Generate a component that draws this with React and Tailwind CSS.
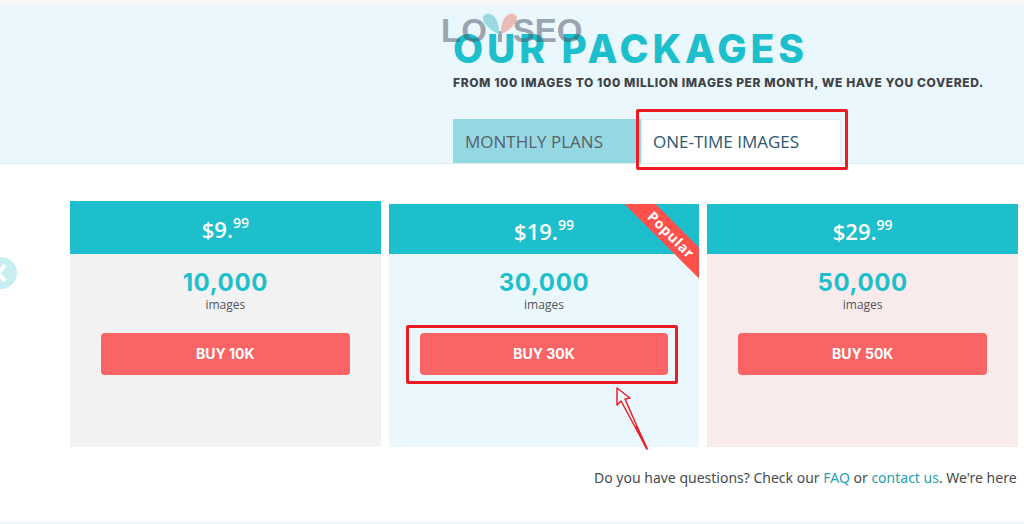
import { useState } from "react"
import clsx from "clsx"

const plans = [
  { dollars: 9, images: "10,000", label: "BUY 10K", body: "bg-[#f2f2f2]" },
  {
    dollars: 19,
    images: "30,000",
    label: "BUY 30K",
    body: "bg-[#eaf8fd]",
    popular: true,
  },
  { dollars: 29, images: "50,000", label: "BUY 50K", body: "bg-[#f9ebeb]" },
]

function Watermark() {
  return (
    <div
      className="pointer-events-none absolute top-2 left-[441px] flex font-['Liberation_Sans',sans-serif] text-[33px] leading-9 font-bold text-[#4b5568] opacity-50"
      aria-hidden="true"
    >
      <span>LO</span>
      <svg className="-mx-1 h-9 w-[34px]" viewBox="0 0 34 36">
        <defs>
          <pattern id="dots" width="3" height="3" patternUnits="userSpaceOnUse">
            <circle cx="1" cy="1" r="0.6" fill="#3b7f92" />
          </pattern>
        </defs>
        <path d="M17 18v11" stroke="#4b5568" strokeWidth="4" />
        <path d="M16 21C7 18 -1 9 0 4C2 -1 10 0 13 6C16 11 16 16 16 21Z" fill="#4fc3c8" />
        <path d="M16 21C7 18 -1 9 0 4C2 -1 10 0 13 6C16 11 16 16 16 21Z" fill="url(#dots)" />
        <path d="M18 21C27 18 35 9 34 4C32 -1 24 0 21 6C18 11 18 16 18 21Z" fill="#ff806f" />
        <path d="M18 21C27 18 35 9 34 4C32 -1 24 0 21 6C18 11 18 16 18 21Z" fill="url(#dots)" />
      </svg>
      <span>SEO</span>
    </div>
  )
}

function PlanTabs() {
  const [active, setActive] = useState("one-time")

  const tabClass = (name) =>
    clsx(
      "block h-full w-full border border-b-0 pl-[11px] text-left text-[17px] whitespace-nowrap cursor-pointer",
      active === name
        ? "border-[#e3eef2] bg-white text-[#2c5870]"
        : "border-[#94d8e4] bg-[#94d8e4] text-[#5b5f68]"
    )

  return (
    <div className="mt-[26px] flex h-11" role="tablist">
      <div className="w-[188px]">
        <button
          role="tab"
          aria-selected={active === "monthly"}
          className={tabClass("monthly")}
          onClick={() => setActive("monthly")}
        >
          MONTHLY PLANS
        </button>
      </div>
      <div className="relative w-[200px]">
        <button
          role="tab"
          aria-selected={active === "one-time"}
          className={tabClass("one-time")}
          onClick={() => setActive("one-time")}
        >
          ONE-TIME IMAGES
        </button>
        {/* Highlight around the tab */}
        <div className="pointer-events-none absolute -top-2.5 -right-[7px] -bottom-[7px] -left-[5px] rounded-xs border-3 border-[#ed1c24]"></div>
      </div>
    </div>
  )
}

function PlanCard({ plan }) {
  return (
    <article className="relative text-center">
      <div
        className={clsx(
          "flex items-center justify-center bg-[#1ebfcc] text-[22px] font-semibold text-white",
          plan.dollars === 9 ? "h-[53px]" : "h-[50px]"
        )}
      >
        <p className="pt-1">
          ${plan.dollars}.<sup className="-top-2.5 text-sm">99</sup>
        </p>
      </div>
      <div className={clsx("h-[193px] px-[31px] pt-[15px]", plan.body)}>
        <h2 className="font-[Inter,sans-serif] text-2xl leading-7 font-bold tracking-wide text-[#1ebfcc]">
          {plan.images}
        </h2>
        <p className="text-xs leading-4 text-[#50555a]">images</p>
        <div className="relative mt-5">
          <button className="h-[42px] w-full cursor-pointer rounded bg-[#fa6465] font-[Inter,sans-serif] text-sm font-bold text-white">
            {plan.label}
          </button>
          {plan.popular && <PopularMarks />}
        </div>
      </div>
      {plan.popular && (
        <div className="pointer-events-none absolute top-0 right-0 size-[76px] overflow-hidden">
          <span className="absolute top-5 -left-3 w-[120px] rotate-45 bg-[#ff504c] text-center text-sm leading-[22px] font-bold tracking-wider text-white">
            Popular
          </span>
        </div>
      )}
    </article>
  )
}

function PopularMarks() {
  return (
    <>
      <div className="pointer-events-none absolute -top-2 -right-2.5 -bottom-[9px] -left-3.5 rounded-xs border-3 border-[#ed1c24]"></div>
      <svg
        className="pointer-events-none absolute top-[54px] right-[18px] h-[64px] w-[34px]"
        viewBox="0 0 34 64"
        fill="none"
        stroke="#ed1c24"
        strokeWidth="1.5"
        strokeLinejoin="round"
      >
        <path d="M1 1L14 11L9 12L31 62L5 14L1 18Z" />
        <path d="M20 39L31 62" strokeWidth="2" />
      </svg>
    </>
  )
}

function App() {
  return (
    <div className="min-h-screen overflow-x-hidden bg-white font-['Open_Sans',sans-serif]">
      <header className="relative border-t-5 border-b border-t-[#f7f7f7] border-b-[#e1edf1] bg-[#eaf8fd] pt-5 pl-[453px]">
        <h1 className="font-[Inter,sans-serif] text-[39px] leading-12 font-extrabold tracking-widest whitespace-nowrap text-[#1ebfcc]">
          OUR PACKAGES
        </h1>
        <p className="font-[Inter,sans-serif] text-xs leading-5 font-extrabold tracking-wider whitespace-nowrap text-[#3f4448]">
          FROM 100 IMAGES TO 100 MILLION IMAGES PER MONTH, WE HAVE YOU COVERED.
        </p>
        <PlanTabs />
        <Watermark />
      </header>

      <main>
        <section className="relative pt-[37px] pr-1.5 pl-[70px]">
          <button
            className="absolute top-[93px] -left-[15px] flex size-8 cursor-pointer items-center justify-center rounded-full bg-[#c7eff3]"
            aria-label="Previous plans"
          >
            <svg className="h-5 w-3" viewBox="0 0 12 20" fill="none" stroke="white" strokeWidth="4">
              <path d="M10 2L3 10L10 18" />
            </svg>
          </button>
          <div className="grid grid-cols-3 items-end gap-2">
            {plans.map((plan) => (
              <PlanCard key={plan.label} plan={plan} />
            ))}
          </div>
        </section>

        <p className="mt-[19px] border-b-2 border-[#eaf8fd] pb-8 pl-[594px] font-['Noto_Sans',sans-serif] text-sm leading-6 whitespace-nowrap text-[#474b4f]">
          Do you have questions? Check our{" "}
          <a href="#faq" className="text-[#279fb0]">
            FAQ
          </a>{" "}
          or{" "}
          <a href="#contact" className="text-[#279fb0]">
            contact us
          </a>
          . We're here
        </p>
      </main>
    </div>
  )
}

export default App
